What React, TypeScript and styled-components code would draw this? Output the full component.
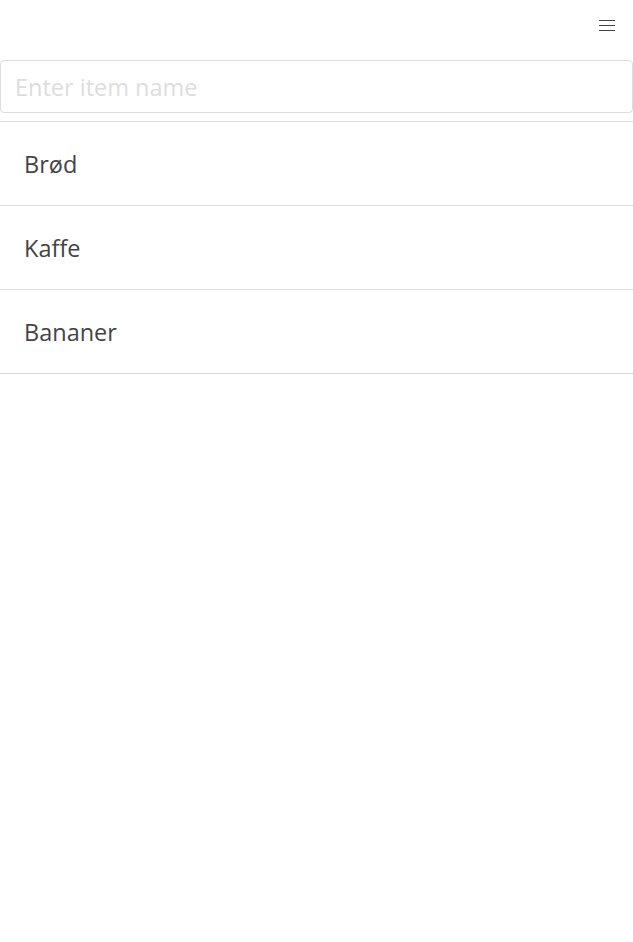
import React from "react";
import styled, { createGlobalStyle } from "styled-components";

const Global = createGlobalStyle`
  html, body { margin: 0; padding: 0; background: #fff; }
  body { font-family: "Open Sans", "Noto Sans", sans-serif; color: #444; }
  * { box-sizing: border-box; }
`;

const Page = styled.div`
  width: 633px;
  display: flex;
  flex-direction: column;
`;

const Header = styled.header`
  height: 60px;
  display: flex;
  justify-content: flex-end;
  align-items: flex-start;
  padding: 20px 18px 0 0;
`;

const MenuButton = styled.button`
  border: none;
  background: none;
  padding: 0;
  width: 16px;
  height: 11px;
  display: flex;
  flex-direction: column;
  justify-content: space-between;
  cursor: pointer;
`;

const MenuLine = styled.span`
  display: block;
  height: 1px;
  width: 16px;
  background: #444;
`;

const Input = styled.input`
  display: block;
  width: 633px;
  height: 53px;
  margin: 0;
  border: 1px solid #ddd;
  border-radius: 4px;
  padding: 0 14px;
  font-family: inherit;
  font-size: 23.5px;
  color: #444;
  outline: none;
  &::placeholder { color: #ddd; }
`;

const List = styled.ul`
  list-style: none;
  margin: 8px 0 0 0;
  padding: 0;
  border-top: 1px solid #e0e0e0;
  box-shadow: 0 1px 2px rgba(0,0,0,0.12);
`;

const Item = styled.li`
  height: 84px;
  display: flex;
  align-items: center;
  padding: 0 24px;
  font-size: 23.5px;
  color: #444;
  border-bottom: 1px solid #e0e0e0;
  &:last-child { border-bottom-color: #d6d6d6; }
`;

const items = ["Brød", "Kaffe", "Bananer"];

export default function App() {
  return (
    <Page>
      <Global />
      <Header>
        <MenuButton aria-label="Menu">
          <MenuLine />
          <MenuLine />
          <MenuLine />
        </MenuButton>
      </Header>
      <Input placeholder="Enter item name" />
      <List>
        {items.map((it) => (
          <Item key={it}>{it}</Item>
        ))}
      </List>
    </Page>
  );
}
